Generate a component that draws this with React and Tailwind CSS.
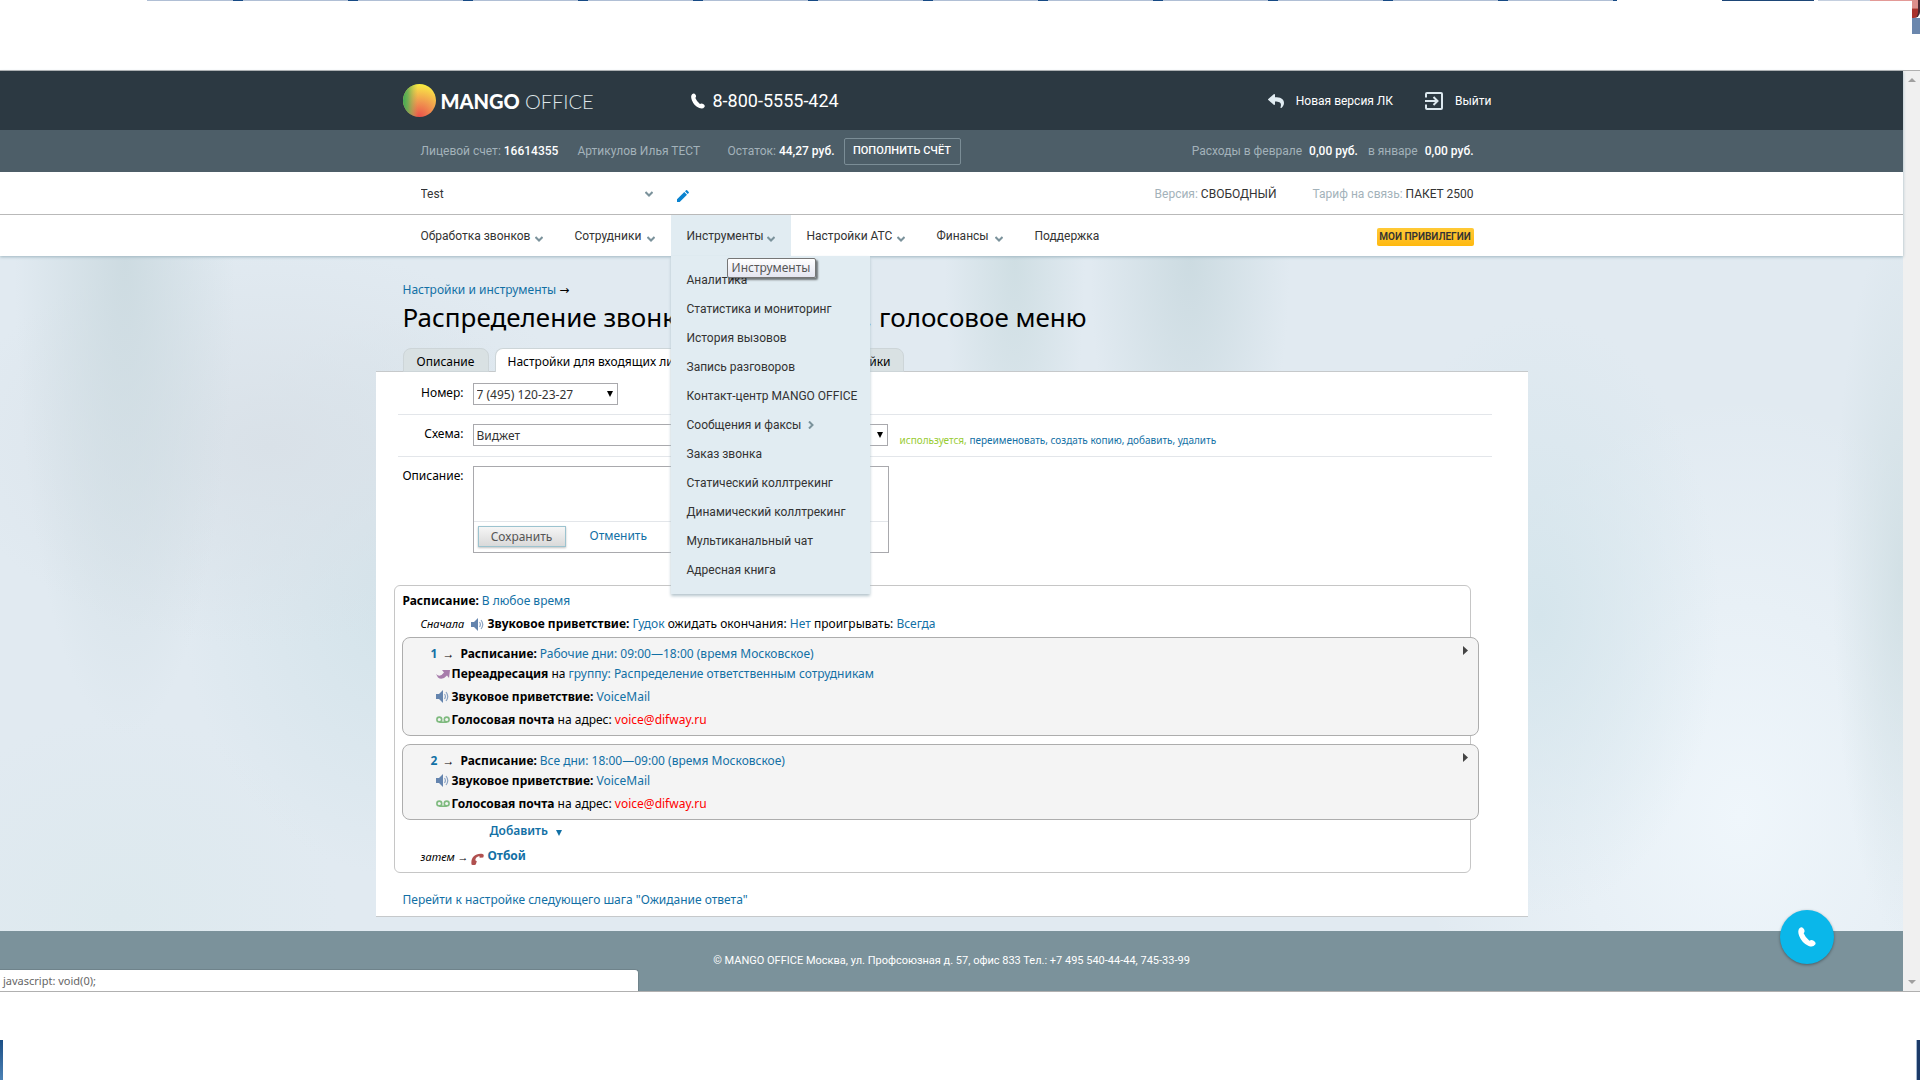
import { FaPhone, FaReply } from 'react-icons/fa'

const navItems = [
  { label: 'Обработка звонков', width: 'w-[154px]', arrow: true },
  { label: 'Сотрудники', width: 'w-[112px]', arrow: true },
  { label: 'Инструменты', width: 'w-[120px]', arrow: true, open: true },
  { label: 'Настройки АТС', width: 'w-[130px]', arrow: true },
  { label: 'Финансы', width: 'w-[98px]', arrow: true },
  { label: 'Поддержка', width: 'w-[98px]' },
]

const toolsMenu = [
  { label: 'Аналитика' },
  { label: 'Статистика и мониторинг' },
  { label: 'История вызовов' },
  { label: 'Запись разговоров' },
  { label: 'Контакт-центр MANGO OFFICE' },
  { label: 'Сообщения и факсы', nested: true },
  { label: 'Заказ звонка' },
  { label: 'Статический коллтрекинг' },
  { label: 'Динамический коллтрекинг' },
  { label: 'Мультиканальный чат' },
  { label: 'Адресная книга' },
]

const windowTabs = Array.from({ length: 13 }, (_, i) => i)

function Chevron({ className }) {
  return (
    <svg viewBox="0 0 8 6" className={className} fill="none" stroke="#7b929b" strokeWidth="2">
      <path d="M0.5 1 L4 4.5 L7.5 1" />
    </svg>
  )
}

function Logo() {
  return (
    <a href="#" className="flex items-center gap-[5px] font-[Lato,sans-serif] text-xl leading-8 text-white">
      <svg viewBox="0 0 33 33" className="size-[33px]">
        <defs>
          <radialGradient id="mango" cx="0.5" cy="1" r="1">
            <stop offset="0" stopColor="#ea4f4a" />
            <stop offset="0.45" stopColor="#f0954f" />
            <stop offset="0.85" stopColor="#f7d548" />
            <stop offset="1" stopColor="#f8ee3f" />
          </radialGradient>
          <linearGradient id="leaf" x1="0" x2="1">
            <stop offset="0" stopColor="#3cab55" />
            <stop offset="0.15" stopColor="#5fae54" stopOpacity="0.85" />
            <stop offset="0.45" stopColor="#a5b055" stopOpacity="0" />
          </linearGradient>
        </defs>
        <circle cx="16.5" cy="16.5" r="16.5" fill="url(#mango)" />
        <circle cx="16.5" cy="16.5" r="16.5" fill="url(#leaf)" />
      </svg>
      <span>
        <b className="font-black">MANGO</b> <span className="font-light text-[#dfe6e9]">OFFICE</span>
      </span>
    </a>
  )
}

function PhoneIcon({ className }) {
  return (
    <svg viewBox="0 0 16 18" className={className} fill="currentColor">
      <path d="M1.200 1.200Q3.500-0.800 5.200 1.800Q6.500 4 5 5.600Q6.500 9.500 10.200 12.300Q12 11.200 14 12.300Q16.500 13.800 15.400 15.800Q13.500 18.500 9.500 17Q3.500 14.500 1 8Q-0.800 3.500 1.200 1.200z" />
    </svg>
  )
}

function SpeakerIcon() {
  return (
    <svg viewBox="0 0 13 13" className="size-[13px] shrink-0">
      <path d="M0 4h3l4-4v13l-4-4H0z" fill="#6484ae" />
      <path d="M8.5 4q1.8 2.500 0 5M10 2q3.500 4.500 0 9" fill="none" stroke="#8ba3c3" strokeWidth="1.2" />
    </svg>
  )
}

function ForwardIcon() {
  return (
    <svg viewBox="0 0 14 10" className="h-[10px] w-[14px] shrink-0">
      <path d="M0 5q4 4 8-1.500L6 1h8l-1 8-2-2.500Q6 12 2 8.500z" fill="#a77cab" />
    </svg>
  )
}

function VoicemailIcon() {
  return (
    <svg viewBox="0 0 14 8" className="h-2 w-[14px] shrink-0" fill="none" stroke="#7fba7f" strokeWidth="1.6">
      <circle cx="3.3" cy="3.500" r="2.4" />
      <circle cx="10.7" cy="3.500" r="2.4" />
      <path d="M3.300 6.200h7.400" />
    </svg>
  )
}

function HangupIcon() {
  return (
    <svg viewBox="0 0 13 12" className="h-3 w-[13px] shrink-0">
      <path d="M0.500 11.500C-0.500 5 4 0 11.500 1q1.500 0.500 1.200 2l-0.500 1.500-3.500 0.300-0.400-1.800Q4.500 4 4.300 7.300l1.500 1-1 3.200q-2.500 1-4.300 0z" fill="#b0504f" />
    </svg>
  )
}

function Select({ id, value, className }) {
  return (
    <div className={`relative h-[22px] ${className}`}>
      <select id={id} className="size-full appearance-none border border-[#a9a9ad] bg-white pt-px pl-[3px] text-xs text-[#333]">
        <option>{value}</option>
      </select>
      <svg viewBox="0 0 6 6" className="pointer-events-none absolute top-2 right-[5px] size-[6px]">
        <path d="M0 0h6L3 6z" fill="#000" />
      </svg>
    </div>
  )
}

function Link({ children }) {
  return <a href="#" className="text-[#1270a5]">{children}</a>
}

function DesktopTop() {
  return (
    <div className="flex h-[70px] justify-between">
      <div className="ml-[147px] flex h-px w-[1470px] overflow-hidden bg-[#b0bfd5]">
        {windowTabs.map((i) => (
          <div key={i} className="flex h-px w-[115px] shrink-0">
            <div className="ml-[86px] w-[10px] bg-[#164a85]" />
          </div>
        ))}
      </div>
      <div className="flex">
        <div className="mr-1 h-px w-[92px] bg-[#1d4677]" />
        <div className="h-px w-[52px] bg-[#c4cfdf]" />
        <div className="h-px w-[42px] bg-[#e39a97]" />
        <div className="flex w-2 flex-col">
          <div className="h-[18px] rounded-br-md border-r-2 border-[#4a2830] bg-linear-to-b from-[#dd8f8b] from-45% to-[#a8322c] to-50%" />
          <div className="h-4 bg-[#6b87ad]" />
        </div>
      </div>
    </div>
  )
}

function Header() {
  return (
    <header className="relative z-10 bg-white font-[Roboto,sans-serif] text-xs shadow-[0_1px_3px_#9fb6c0]">
      <div className="bg-[#2c3942] text-white">
        <div className="mx-auto flex h-[59px] max-w-[1152px] items-center pr-9 pl-[27px]">
          <div className="w-[288px]"><Logo /></div>
          <div className="flex items-center gap-2 text-lg">
            <PhoneIcon className="h-4 w-[14px]" />
            8-800-5555-424
          </div>
          <div className="ml-auto flex items-center">
            <a href="#" className="flex items-center gap-3">
              <FaReply className="size-4 text-[#e1ecf2]" />
              Новая версия ЛК
            </a>
            <a href="#" className="ml-8 flex items-center gap-3">
              <svg viewBox="0 0 18 18" className="size-[18px]" fill="none" stroke="#dce8ee" strokeWidth="2">
                <path d="M1 5.500V2q0-1 1-1h14q1 0 1 1v14q0 1-1 1H2q-1 0-1-1v-3.500M0 9h12M8.500 5l4 4-4 4" />
              </svg>
              Выйти
            </a>
          </div>
        </div>
      </div>

      <div className="bg-[#4d5e68] text-[#a3b2ba]">
        <div className="mx-auto flex h-[42px] max-w-[1152px] items-center pr-[54px] pl-[45px]">
          <div className="w-[157px]">Лицевой счет: <b className="font-medium text-white">16614355</b></div>
          <div className="w-[150px]">Артикулов Илья ТЕСТ</div>
          <div className="w-[116px] whitespace-nowrap">Остаток: <b className="font-medium text-white">44,27 руб.</b></div>
          <button className="h-[27px] w-[117px] rounded-xs border border-[#7b8d96] text-[11px] font-medium text-white">ПОПОЛНИТЬ СЧЁТ</button>
          <div className="ml-auto flex gap-[7px]">
            <span>Расходы в феврале</span>
            <b className="font-medium text-white">0,00 руб.</b>
            <span className="ml-[3px]">в январе</span>
            <b className="font-medium text-white">0,00 руб.</b>
          </div>
        </div>
      </div>

      <div className="border-b border-[#b9b9b9]">
        <div className="mx-auto flex h-[42px] max-w-[1152px] items-center pt-px pr-[54px] pl-[45px]">
          <div className="relative w-[232px]">
            <select aria-label="АТС" className="w-full appearance-none bg-white text-[#333]">
              <option>Test</option>
            </select>
            <Chevron className="pointer-events-none absolute top-[5px] right-0 h-[6px] w-2" />
          </div>
          <button aria-label="Изменить" className="ml-6 pt-1">
            <svg viewBox="0 0 12 12" className="size-3" fill="#0a83d0">
              <path d="M0 12V9.300L7.300 2 10 4.700 2.700 12zM8 1.300L9.100 0.300q0.500-0.500 1 0l1.600 1.600q0.500 0.500 0 1L10.700 4z" />
            </svg>
          </button>
          <div className="ml-auto text-[#a3b2ba]">Версия: <span className="text-[#333]">СВОБОДНЫЙ</span></div>
          <div className="ml-9 text-[#a3b2ba]">Тариф на связь: <span className="text-[#333]">ПАКЕТ 2500</span></div>
        </div>
      </div>

      <div className="mx-auto flex h-[41px] max-w-[1152px] items-center pr-[54px] pl-[29px]">
        <nav className="flex h-full">
          {navItems.map((item) => (
            <div key={item.label} className={`relative ${item.width} ${item.open ? 'bg-[#e1ecf2]' : ''}`}>
              <a href="#" className="flex h-full items-center justify-between px-4 whitespace-nowrap text-[#333]">
                {item.label}
                {item.arrow && <Chevron className="mt-[6px] h-[6px] w-2 shrink-0" />}
              </a>
              {item.open && <ToolsMenu />}
            </div>
          ))}
        </nav>
        <button className="mt-[2px] ml-auto h-[18px] w-[97px] rounded-xs bg-linear-to-b from-[#ffc935] to-[#ffb90b] text-[10px] font-semibold whitespace-nowrap text-[#333]">МОИ ПРИВИЛЕГИИ</button>
      </div>
    </header>
  )
}

function ToolsMenu() {
  return (
    <div className="absolute top-full left-0 w-[199px] bg-[#e1ecf2] pt-[9px] pb-[10px] shadow-[0_2px_3px_#b4c4cc]">
      {toolsMenu.map((item) => (
        <a key={item.label} href="#" className="flex h-[29px] items-center gap-[6px] pl-4 whitespace-nowrap text-[#333]">
          {item.label}
          {item.nested && <Chevron className="h-[6px] w-2 -rotate-90" />}
        </a>
      ))}
      <div role="tooltip" className="absolute top-[2px] left-14 h-5 w-[89px] rounded-xs border border-[#767676] bg-linear-to-b from-white to-[#e4e5f0] text-center font-['Noto_Sans',sans-serif] leading-[17px] text-[#575757] shadow-[2px_2px_2px_#00000080]">
        Инструменты
      </div>
    </div>
  )
}

function SettingsForm() {
  return (
    <form className="ml-[22px] pr-9" onSubmit={(e) => e.preventDefault()}>
      <div className="flex h-[43px] border-b border-[#e3e6ea] pt-[11px]">
        <label htmlFor="number" className="w-[66px] text-right leading-5">Номер:</label>
        <Select id="number" value="7 (495) 120-23-27" className="ml-[9px] w-[145px]" />
      </div>
      <div className="flex h-[42px] border-b border-[#e3e6ea] pt-[9px]">
        <label htmlFor="scheme" className="w-[66px] text-right leading-5">Схема:</label>
        <Select id="scheme" value="Виджет" className="ml-[9px] w-[415px]" />
        <div className="ml-3 pt-2 text-[10px] leading-4 text-[#1270a5]">
          <span className="text-[#99cc33]">используется,</span> <a href="#">переименовать</a>, <a href="#">создать копию</a>, <a href="#">добавить</a>, <a href="#">удалить</a>
        </div>
      </div>
      <div className="flex pt-[9px]">
        <label htmlFor="description" className="w-[66px] text-right leading-5">Описание:</label>
        <div className="ml-[9px] w-[416px] border border-[#a9a9ad]">
          <textarea id="description" className="block h-[54px] w-full resize-none bg-white" />
          <div className="flex h-[31px] items-start gap-6 border-t border-[#e3e6ea] pt-1 pl-1 leading-5">
            <button className="h-[21px] w-[88px] border border-[#9cc3cf] bg-linear-to-b from-[#f6f6f6] to-[#d9d9d9] text-[#555] shadow-[0_1px_2px_#00000040]">Сохранить</button>
            <Link>Отменить</Link>
          </div>
        </div>
      </div>
    </form>
  )
}

function ScheduleCard({ number, time, children }) {
  return (
    <div className="relative mr-[-9px] mb-2 ml-[7px] rounded-lg border border-[#adadad] bg-[#f4f4f4] pt-[6px] pb-[3px] pl-7">
      <div className="flex h-[19px] items-center">
        <span className="flex w-[30px] gap-[5px]"><b className="text-[#1270a5]">{number}</b>→</span>
        <b className="mr-[3px]">Расписание:</b> <Link>{time}</Link>
      </div>
      {children}
      <svg viewBox="0 0 5 9" className="absolute top-2 right-[10px] h-[9px] w-[5px]">
        <path d="M0 0L5 4.500L0 9z" fill="#444" />
      </svg>
    </div>
  )
}

function ActionRow({ icon, title, children }) {
  return (
    <div className="flex h-[23px] items-center pb-[2px] pl-[5px]">
      <span className="flex w-4">{icon}</span>
      <p><b>{title}</b> {children}</p>
    </div>
  )
}

function Schedule() {
  return (
    <section className="mt-8 mr-[57px] ml-[18px] rounded-md border border-[#c6c6c6] pt-[2px]">
      <p className="flex h-[26px] items-center gap-[3px] pl-2"><b>Расписание:</b> <Link>В любое время</Link></p>
      <div className="mb-[3px] flex h-5 items-center pl-[26px]">
        <i className="w-[50px] text-[11px]">Сначала</i>
        <span className="w-[17px]"><SpeakerIcon /></span>
        <p><b>Звуковое приветствие:</b> <Link>Гудок</Link> ожидать окончания: <Link>Нет</Link> проигрывать: <Link>Всегда</Link></p>
      </div>
      <ScheduleCard number="1" time="Рабочие дни: 09:00—18:00 (время Московское)">
        <ActionRow icon={<ForwardIcon />} title="Переадресация">на <Link>группу: Распределение ответственным сотрудникам</Link></ActionRow>
        <ActionRow icon={<SpeakerIcon />} title="Звуковое приветствие:"><Link>VoiceMail</Link></ActionRow>
        <ActionRow icon={<VoicemailIcon />} title="Голосовая почта">на адрес: <a href="#" className="text-[#f00]">voice@difway.ru</a></ActionRow>
      </ScheduleCard>
      <ScheduleCard number="2" time="Все дни: 18:00—09:00 (время Московское)">
        <ActionRow icon={<SpeakerIcon />} title="Звуковое приветствие:"><Link>VoiceMail</Link></ActionRow>
        <ActionRow icon={<VoicemailIcon />} title="Голосовая почта">на адрес: <a href="#" className="text-[#f00]">voice@difway.ru</a></ActionRow>
      </ScheduleCard>
      <button className="-mt-2 ml-[95px] flex h-[22px] items-center gap-2 font-semibold text-[#1270a5]">
        Добавить
        <svg viewBox="0 0 6 6" className="mt-[3px] size-[6px]"><path d="M0 0h6L3 6z" fill="#1270a5" /></svg>
      </button>
      <div className="flex h-[30px] items-center pl-[26px]">
        <i className="w-[50px] text-[11px]">затем →</i>
        <span className="w-[17px] pt-1"><HangupIcon /></span>
        <a href="#" className="pb-[2px] font-bold text-[#1270a5]">Отбой</a>
      </div>
    </section>
  )
}

function Content() {
  return (
    <main className="mx-auto max-w-[1152px] pb-[14px] text-xs">
      <div className="pl-[27px]">
        <p className="pt-6 leading-5"><Link>Настройки и инструменты</Link> <span className="font-['DejaVu_Sans',sans-serif]">→</span></p>
        <h1 className="pb-[13px] text-[26px] leading-[35px] whitespace-nowrap">Распределение звонков операторам, голосовое меню</h1>
        <div className="-mb-px flex h-6 gap-[6px] text-center leading-[26px]">
          <a href="#" className="w-[86px] rounded-t-lg border border-[#cdd5d8] bg-[#d9e1e3]">Описание</a>
          <a href="#" className="relative w-[224px] rounded-t-lg border border-b-0 border-[#cdd5d8] bg-white pl-3 text-left">Настройки для входящих линий</a>
          <a href="#" className="w-[179px] rounded-t-lg border border-[#cdd5d8] bg-[#d9e1e3] pr-3 text-right">Расширенные настройки</a>
        </div>
      </div>
      <div className="border-y border-[#c6c9cb] bg-white">
        <SettingsForm />
        <Schedule />
        <p className="pt-[10px] pl-[27px] leading-[33px]"><Link>Перейти к настройке следующего шага "Ожидание ответа"</Link></p>
      </div>
    </main>
  )
}

export default function App() {
  return (
    <div className="flex min-h-screen flex-col bg-white font-['Noto_Sans',sans-serif] text-black">
      <DesktopTop />
      <div className="flex border-y border-[#b0b0b0]">
        <div className="relative flex-1 bg-[#e1eaf1]">
          <Header />
          <div className="bg-[radial-gradient(ellipse_110px_480px_at_125px_0,#cddbe1,transparent),radial-gradient(ellipse_70px_300px_at_1015px_0,#cfdee3,transparent),radial-gradient(ellipse_100px_300px_at_1190px_0,#ccdbe1,transparent),radial-gradient(ellipse_320px_200px_at_270px_190px,#d9e1e8,transparent),radial-gradient(ellipse_220px_280px_at_400px_340px,#d3e3ea,transparent),radial-gradient(ellipse_180px_300px_at_1540px_360px,#d5e5ec,transparent),radial-gradient(ellipse_70px_360px_at_1903px_320px,#d2e0e5,transparent),radial-gradient(ellipse_320px_420px_at_1740px_560px,#eff6fb,transparent),radial-gradient(ellipse_220px_200px_at_120px_660px,#dde9ee,transparent)]">
            <Content />
          </div>
          <footer className="h-[60px] bg-[#7b929b] text-center font-[Roboto,sans-serif] text-[11px] leading-[60px] text-white">
            © MANGO OFFICE Москва, ул. Профсоюзная д. 57, офис 833 Тел.: +7 495 540-44-44, 745-33-99
          </footer>
          <div className="absolute bottom-0 left-0 h-[22px] w-[639px] rounded-tr border-t border-r border-[#6f838b] bg-white pl-[3px] text-[11px] leading-[22px] text-[#666]">
            javascript: void(0);
          </div>
          <button aria-label="Позвонить" className="absolute right-[69px] bottom-[27px] flex size-[54px] items-center justify-center rounded-full bg-[#0ab7ea] text-white shadow-[0_1px_3px_#00000060]">
            <PhoneIcon className="h-5 w-[18px]" />
          </button>
        </div>
        <div className="flex w-[17px] flex-col items-center justify-between bg-[#f0f0f0] py-[7px]">
          <svg viewBox="0 0 8 4" className="h-1 w-2"><path d="M0 4L4 0L8 4z" fill="#a0a0a0" /></svg>
          <svg viewBox="0 0 8 4" className="h-1 w-2"><path d="M0 0L4 4L8 0z" fill="#a0a0a0" /></svg>
        </div>
      </div>
      <div className="mt-auto flex h-10 justify-between">
        <div className="w-[3px] bg-linear-to-b from-[#1b4f86] to-[#4c82b5]" />
        <div className="w-1 border-l border-[#a5bad2] bg-[#1c3a68]" />
      </div>
    </div>
  )
}
